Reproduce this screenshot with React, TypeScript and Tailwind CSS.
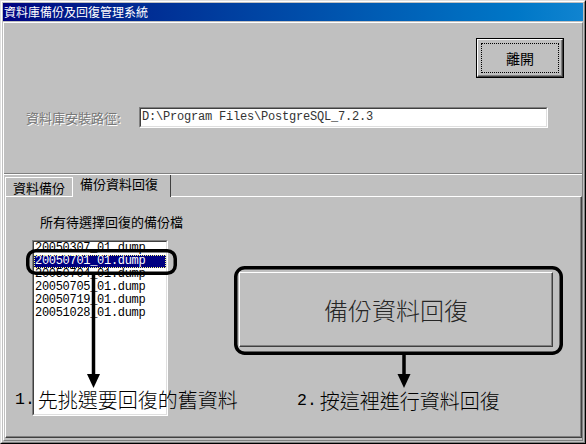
const cjk = "font-['Noto_Sans_CJK_TC','Noto_Sans',sans-serif]";
const mono = "font-['Liberation_Mono','Noto_Sans_CJK_TC',monospace]";

const dumps = [
  "20050307_01.dump",
  "20050701_01.dump",
  "20050704_01.dump",
  "20050705_01.dump",
  "20050719_01.dump",
  "20051028_01.dump",
];

function Annotations() {
  return (
    <svg
      className="absolute inset-0 pointer-events-none"
      width="586"
      height="444"
      viewBox="0 0 586 444"
    >
      <rect x="26.75" y="249.75" width="147.5" height="22.5" rx="8" fill="none" stroke="#000" strokeWidth="3.5" />
      <line x1="92.5" y1="273" x2="92.5" y2="376" stroke="#000" strokeWidth="3.5" />
      <polygon points="86,373 99,373 92.5,387" fill="#000" />
      <rect x="234.75" y="266.75" width="325.5" height="85.5" rx="9" fill="none" stroke="#000" strokeWidth="3.5" />
      <line x1="403" y1="353" x2="403" y2="376" stroke="#000" strokeWidth="3.5" />
      <polygon points="396.5,373 409.5,373 403,387" fill="#000" />
    </svg>
  );
}

export default function App() {
  const selected = 1;

  return (
    <div className={`relative w-[586px] h-[444px] bg-[#c0c0c0] border border-t-[#dfdfdf] border-l-[#dfdfdf] border-r-black border-b-black ${cjk}`}>
      <div className="h-full border border-t-white border-l-white border-r-[#808080] border-b-[#808080] p-[1px] flex flex-col">
        {/* title bar */}
        <div className="h-[18px] shrink-0 flex items-center pl-[1px] bg-gradient-to-r from-[#000080] to-[#1084d0]">
          <span className="text-white text-[12px] leading-[12px]">資料庫備份及回復管理系統</span>
        </div>

        {/* client area */}
        <div className="mt-[1px] flex-1 flex flex-col border border-t-white border-l-white border-r-[#808080] border-b-[#808080]">
          <div className="h-[150px] shrink-0">
            <div className="flex justify-end pr-[18px] pt-[15px]">
              <div className="w-[88px] h-[40px] border border-black">
                <div className="h-full border border-t-white border-l-white border-r-[#404040] border-b-[#404040] shadow-[inset_-1px_-1px_0_#808080] p-[3px]">
                  <div className="h-full border border-dotted border-black flex items-center justify-center text-[14px] text-black">
                    離開
                  </div>
                </div>
              </div>
            </div>

            <div className="flex items-center pl-[22px] mt-[29px]">
              <div className="w-[113px] text-[13px] leading-[13px] text-[#777] [text-shadow:1px_1px_0_#ffffff]">
                資料庫安裝路徑:
              </div>
              <div className="w-[409px] h-[21px] border border-t-[#808080] border-l-[#808080] border-r-white border-b-white">
                <div className="h-full border border-t-[#404040] border-l-[#404040] border-r-[#dfdfdf] border-b-[#dfdfdf] bg-white flex items-center pl-[1px]">
                  <span className={`${mono} text-[12px] tracking-[-0.2px] leading-[13px] text-[#333]`}>
                    {"D:\\Program Files\\PostgreSQL_7.2.3"}
                  </span>
                </div>
              </div>
            </div>
          </div>

          {/* separator */}
          <div className="h-[2px] shrink-0 border-t border-t-[#808080] border-b border-b-white" />

          {/* tabs */}
          <div className="h-[21px] shrink-0 flex items-end pl-[1px]">
            <div className="w-[68px] h-[19px] border-t border-l border-r border-white flex items-center justify-center text-[13px] leading-[13px] text-black">
              資料備份
            </div>
            <div className="relative z-10 -mb-[1px] w-[98px] h-[22px] bg-[#c0c0c0] border-r border-r-[#404040] pl-[7px] pt-[2px] text-[13px] leading-[13px] text-black">
              備份資料回復
            </div>
          </div>

          {/* tab panel */}
          <div className="ml-[1px] w-[577px] h-[242px] shrink-0 border border-t-white border-l-white border-r-[#404040] border-b-[#404040] shadow-[inset_-1px_-1px_0_#808080] pl-[26px] pt-[18px] flex items-start">
            <div className="w-[160px] shrink-0">
              <div className="pl-[8px] text-[13px] leading-[13px] text-black whitespace-nowrap">所有待選擇回復的備份檔</div>
              <div className="mt-[12px] w-[136px] h-[176px] border border-t-[#808080] border-l-[#808080] border-r-white border-b-white">
                <div className="h-full border border-t-[#404040] border-l-[#404040] border-r-[#dfdfdf] border-b-[#dfdfdf] bg-white overflow-hidden">
                  {dumps.map((d, i) => (
                    <div
                      key={d}
                      className={`h-[13px] pl-[1px] ${mono} text-[12px] tracking-[-0.3px] leading-[13px] ${
                        i === selected
                          ? "bg-[#000080] text-white outline outline-1 outline-dotted outline-[#ffff80] -outline-offset-1"
                          : "text-black"
                      }`}
                    >
                      {d}
                    </div>
                  ))}
                </div>
              </div>
            </div>

            <div className="ml-[47px] mt-[57px] w-[314px] h-[75px] border border-t-white border-l-white border-r-[#404040] border-b-[#404040] shadow-[inset_-1px_-1px_0_#808080] flex items-center justify-center text-[24px] leading-[24px] font-light text-[#262626]">
              備份資料回復
            </div>
          </div>
        </div>
      </div>

      <Annotations />

      <div className="absolute left-[14px] top-[389px] flex items-center text-black">
        <span className={`${mono} text-[16.5px] leading-[20px]`}>1.</span>
        <span className="ml-[3px] text-[20px] leading-[20px] font-light">先挑選要回復的舊資料</span>
      </div>
      <div className="absolute left-[296px] top-[390px] flex items-center text-black">
        <span className={`${mono} text-[16.5px] leading-[20px]`}>2.</span>
        <span className="ml-[3px] text-[20px] leading-[20px] font-light">按這裡進行資料回復</span>
      </div>
    </div>
  );
}
